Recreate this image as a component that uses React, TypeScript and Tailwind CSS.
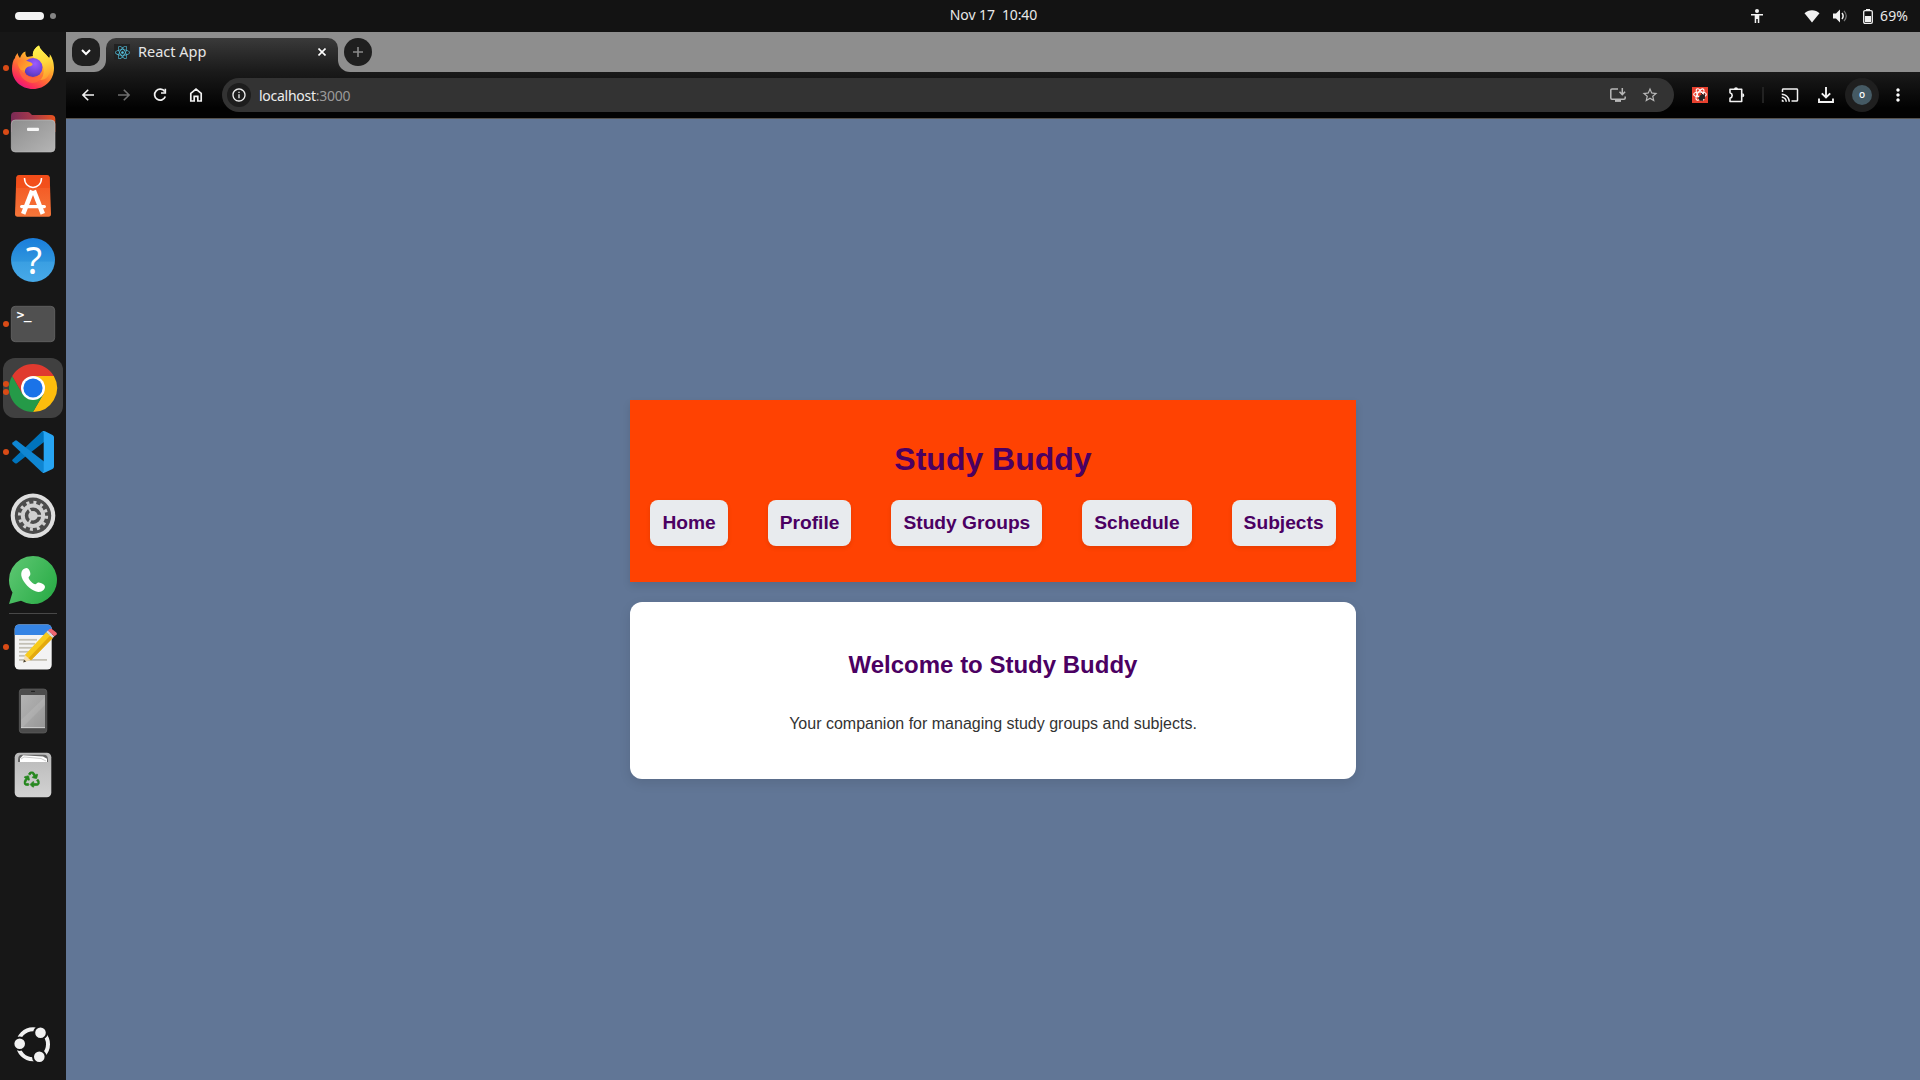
import React from "react";
import { FaReact, FaRecycle } from "react-icons/fa";
import {
  MdCast,
  MdInfoOutline,
  MdMoreVert,
  MdStarBorder,
} from "react-icons/md";

type DockItemProps = {
  dots?: number;
  active?: boolean;
  children: React.ReactNode;
};

function DockItem({ dots = 0, active = false, children }: DockItemProps) {
  return (
    <div
      className={
        active
          ? "relative size-[60px] shrink-0 rounded-xl bg-[#404040]"
          : "relative size-[60px] shrink-0"
      }
    >
      <svg viewBox="0 0 60 60" className="size-[60px]">
        {children}
      </svg>
      <div className="absolute top-0 left-0 flex h-full flex-col items-center justify-center gap-[2px]">
        {Array.from({ length: dots }).map((_, i) => (
          <span key={i} className="block size-[6px] rounded-full bg-[#d94b16]" />
        ))}
      </div>
    </div>
  );
}

function Firefox() {
  return (
    <>
      <defs>
        <linearGradient id="ffBody" x1="0.8" y1="0.1" x2="0.25" y2="1">
          <stop offset="0" stopColor="#fff14a" />
          <stop offset="0.3" stopColor="#ffb52c" />
          <stop offset="0.6" stopColor="#ff6a35" />
          <stop offset="0.85" stopColor="#fb2b5a" />
          <stop offset="1" stopColor="#e0158a" />
        </linearGradient>
        <radialGradient id="ffGlobe" cx="0.6" cy="0.3" r="0.8">
          <stop offset="0" stopColor="#9c5bff" />
          <stop offset="0.6" stopColor="#7043d8" />
          <stop offset="1" stopColor="#4b36a8" />
        </radialGradient>
        <linearGradient id="ffFlame" x1="0.4" y1="0" x2="0.6" y2="1">
          <stop offset="0" stopColor="#fff44f" />
          <stop offset="0.5" stopColor="#ffd93a" />
          <stop offset="1" stopColor="#ff9a2e" />
        </linearGradient>
        <linearGradient id="ffFox" x1="0" y1="0" x2="1" y2="0.6">
          <stop offset="0" stopColor="#ff7a2d" />
          <stop offset="1" stopColor="#ffb52c" />
        </linearGradient>
      </defs>
      <path
        d="M12 20 C12 18 14 16 14.5 15 C15 17 16 19 17 20 C18 17 20 14 22.5 13.5 C22 16 23 18 24 19 L30 18 C29 13 33 9 36 7.5 C37 12 42 15 46 20 C47 19 47 17 46.500 16 C50 20 51 26 51 30 C51 42 42 51 30 51 C18 51 9 42 9 31 C9 26 10 22 12 20 Z"
        fill="url(#ffBody)"
      />
      <path
        d="M30 18.500 C29 13 33 9 36 7.500 C37 12 42 15 46 20 C49 25 49 33 45 38 C43 41 40 42 37 42 C42 38 42 29 37 24 C35 21 31 21 30 18.500 Z"
        fill="url(#ffFlame)"
      />
      <circle cx="30" cy="29.500" r="9.500" fill="url(#ffGlobe)" />
      <path
        d="M14.500 23 C18 21.500 21 22.500 24 23 C27 24 29.700 25 29.700 26.500 C29 28 26 28.500 24.500 29 C22 30.500 22 33 21 35 C18 33 14 28 14.500 23 Z"
        fill="url(#ffFox)"
      />
      <path
        d="M20.700 32 C22 38 27 40 31 40 C36 40 39 37 40 34 C40 41 35 45 29 45 C22 44 17 39 16 32 Z"
        fill="#ff7139"
        opacity="0.65"
      />
    </>
  );
}

function Files() {
  return (
    <>
      <defs>
        <linearGradient id="fiBack" x1="0" y1="0" x2="1" y2="0">
          <stop offset="0" stopColor="#7a2a56" />
          <stop offset="0.5" stopColor="#a8394a" />
          <stop offset="1" stopColor="#e9541f" />
        </linearGradient>
        <linearGradient id="fiFront" x1="0" y1="0" x2="1" y2="1">
          <stop offset="0" stopColor="#8d8d8d" />
          <stop offset="1" stopColor="#b5b5b5" />
        </linearGradient>
      </defs>
      <path
        d="M8 14 Q8 10 12 10 H25 Q26.500 10 27.500 11.500 L29 13 H48 Q52.300 13 52.300 17 V30 H8 Z"
        fill="url(#fiBack)"
      />
      <rect x="8.300" y="18" width="43.700" height="32" rx="4" fill="url(#fiFront)" stroke="#c0c0c0" strokeWidth="0.600" />
      <rect x="24" y="25.700" width="12" height="3.300" rx="1" fill="#f7f7f7" />
    </>
  );
}

function AppCenter() {
  return (
    <>
      <defs>
        <linearGradient id="apBag" x1="0" y1="0" x2="0" y2="1">
          <stop offset="0" stopColor="#f4511e" />
          <stop offset="1" stopColor="#f5763a" />
        </linearGradient>
      </defs>
      <path d="M16 9 H44 Q46.500 9 46.700 11.500 L48 48 Q48 50.700 45.500 50.700 H14.500 Q12 50.700 12 48 L13.300 11.500 Q13.500 9 16 9 Z" fill="url(#apBag)" />
      <path d="M12.900 22 L13.300 11.500 Q13.500 9 16 9 H44 Q46.500 9 46.700 11.500 L47.100 22 Z" fill="#f04a15" opacity="0.600" />
      <path d="M21.500 12 C21.500 24.500 38.500 24.500 38.500 12" fill="none" stroke="#fff" strokeWidth="1.500" />
      <g stroke="#fff" fill="none" strokeLinecap="butt">
        <path d="M29.200 24.700 L20.200 47.800" strokeWidth="4.600" />
        <path d="M30.800 24.700 L39.800 47.800" strokeWidth="4.600" />
        <path d="M18.700 40.600 H41.300" strokeWidth="3.400" strokeLinecap="round" />
      </g>
    </>
  );
}

function Help() {
  return (
    <>
      <defs>
        <linearGradient id="heBg" x1="0" y1="0" x2="0" y2="1">
          <stop offset="0" stopColor="#1a7ddb" />
          <stop offset="0.530" stopColor="#2e95dd" />
          <stop offset="0.540" stopColor="#3a9fe2" />
          <stop offset="1" stopColor="#47a9e8" />
        </linearGradient>
      </defs>
      <circle cx="30" cy="30" r="22" fill="url(#heBg)" />
      <text x="30.800" y="43.800" textAnchor="middle" fontSize="37.500" fill="#fff" fontFamily="Noto Sans, sans-serif">
        ?
      </text>
    </>
  );
}

function Terminal() {
  return (
    <>
      <rect x="8.300" y="12.300" width="43.400" height="35.400" rx="4" fill="#505050" stroke="#676767" strokeWidth="0.800" />
      <text x="13.500" y="25.200" fontSize="13" fontWeight="700" fill="#fff" fontFamily="DejaVu Sans Mono, monospace" letterSpacing="-0.500">
        &gt;_
      </text>
    </>
  );
}

function Chrome() {
  return (
    <>
      <path d="M30 18 H50.800 A24 24 0 0 1 30 54 L40.400 36 Z" fill="#fdbd0d" />
      <path d="M30 54 A24 24 0 0 1 9.220 18 L19.600 36 L40.400 36 Z" fill="#259a48" />
      <path d="M9.220 18 A24 24 0 0 1 50.780 18 H30 L19.600 36 Z" fill="#e03a2f" />
      <circle cx="30" cy="30" r="12" fill="#fff" />
      <circle cx="30" cy="30" r="9.600" fill="#1a73e8" />
    </>
  );
}

function Code() {
  return (
    <>
      <path d="M9.600 37.500 Q8.600 38.300 9.600 39.300 L12 41.200 Q13 42 14 41.200 L41 20 V9 L38.700 9.800 Z" fill="#0074bd" />
      <path d="M9.600 22.500 Q8.600 21.500 9.600 20.600 L12 18.700 Q13 18 14 18.700 L41 39.500 V51 L38.700 50 Z" fill="#0f86d2" />
      <path d="M38.600 50.300 Q40.200 51.500 42 50.600 L49.500 47 Q51 46.200 51 44.600 V15.200 Q51 13.700 49.500 13 L42 9.200 Q40.200 8.400 38.600 9.700 Q40.700 8.600 40.700 11.500 V48.500 Q40.700 51.200 38.600 50.300 Z" fill="#27a5f3" />
    </>
  );
}

function Settings() {
  return (
    <>
      <circle cx="30" cy="29.800" r="22.300" fill="#dedede" />
      <circle cx="30" cy="29.800" r="18.200" fill="#4b4b4b" />
      <circle cx="30" cy="29.800" r="13.500" fill="none" stroke="#d0d0d0" strokeWidth="3.200" strokeDasharray="3 4.070" />
      <circle cx="30" cy="29.800" r="10.200" fill="none" stroke="#d0d0d0" strokeWidth="4" />
      <circle cx="30" cy="29.800" r="4.700" fill="#d0d0d0" />
      <g stroke="#d0d0d0" strokeWidth="2">
        <path d="M30 29.800 H41" />
        <path d="M30 29.800 L24.500 20.300" />
        <path d="M30 29.800 L24.500 39.300" />
      </g>
    </>
  );
}

function WhatsApp() {
  return (
    <>
      <defs>
        <linearGradient id="waBg" x1="0" y1="0" x2="1" y2="0.600">
          <stop offset="0" stopColor="#5fc874" />
          <stop offset="1" stopColor="#2eae4a" />
        </linearGradient>
      </defs>
      <path d="M30 6 A24 24 0 1 1 18 50.800 L6 54 L9.500 42.500 A24 24 0 0 1 30 6 Z" fill="url(#waBg)" />
      <path
        transform="translate(18 18)"
        d="M2 1.500 C4 0 6 -0.500 7.500 1 C9 3 9.800 5.500 9.200 7 C8.800 8.200 7.500 8.700 7.600 9.800 C8 12 12 16 14.200 16.300 C15.300 16.400 15.800 14.800 17 14.500 C18.800 14.200 21.500 15.500 23.200 17 C24.600 18.500 24 20.500 22.500 22 C20.500 24 17.500 24.500 14.500 23.300 C8.500 20.800 3 15.500 0.800 9.500 C-0.300 6.500 0.200 3.300 2 1.500 Z"
        fill="#fff"
      />
    </>
  );
}

function Editor() {
  return (
    <>
      <rect x="11.700" y="7.500" width="37" height="45" rx="4.500" fill="#f3f3f3" />
      <path d="M11.700 18 V12 Q11.700 7.500 16.200 7.500 H44.200 Q48.700 7.500 48.700 12 V18 Z" fill="#3584e4" />
      <g stroke="#c3c0b5" strokeWidth="1.800">
        <path d="M16 22.800 H34" />
        <path d="M16 26.800 H32" />
        <path d="M16 30.800 H29" />
        <path d="M16 34.800 H26" />
        <path d="M16 38.800 H23" />
        <path d="M16 42.900 H44" />
      </g>
      <path d="M20.300 45.500 L22 37.500 L28 43 Z" fill="#f5deae" />
      <path d="M20.300 45.500 L20.900 42.600 L23.200 44.600 Z" fill="#4a4438" />
      <path d="M21.800 38 L43.300 15 L49.800 21 L28 43.300 Z" fill="#f7cb1c" />
      <path d="M25.500 41.200 L47.200 18.600 L49.800 21 L28 43.300 Z" fill="#e3a90e" />
      <path d="M43.300 15 L44.900 13.400 L51.300 19.300 L49.800 21 Z" fill="#d9d9d9" />
      <path d="M44.900 13.400 L46.300 12.300 Q47.800 11.300 49.500 12.600 L53.300 15.500 Q54.500 16.700 53.500 17.800 L51.300 19.300 Z" fill="#ee6570" />
    </>
  );
}

function Mobile() {
  return (
    <>
      <defs>
        <linearGradient id="moBg" x1="0" y1="0" x2="1" y2="1">
          <stop offset="0" stopColor="#b3b3b3" />
          <stop offset="0.500" stopColor="#a6a6a6" />
          <stop offset="1" stopColor="#969696" />
        </linearGradient>
      </defs>
      <rect x="16.300" y="8" width="27.500" height="44" rx="3" fill="#4c4c4c" stroke="#606060" strokeWidth="0.700" />
      <rect x="28" y="9.800" width="4" height="1.200" rx="0.600" fill="#222" />
      <rect x="18" y="14" width="24" height="33" fill="url(#moBg)" />
      <path d="M18 39 L42 16 V24 L19 47 H18 Z" fill="#fff" opacity="0.100" />
      <path d="M18 46.700 H42" stroke="#ddd" strokeWidth="0.800" />
    </>
  );
}

function Trash() {
  return (
    <>
      <defs>
        <linearGradient id="trBg" x1="0" y1="0" x2="0" y2="1">
          <stop offset="0" stopColor="#b9b9b9" />
          <stop offset="1" stopColor="#d2d2d2" />
        </linearGradient>
      </defs>
      <rect x="11.700" y="7.700" width="36.600" height="44.600" rx="4.500" fill="url(#trBg)" />
      <path d="M15 15 Q15 9.700 19 9.700 H41 Q45 9.700 45 15 V17 H15 Z" fill="#666" />
      <path d="M17 17 V13.500 L20 10.300 L40 11.500 L44 13.800 V17 Z" fill="#fff" />
      <path d="M18 14 L21 12 L38 13.500 L43 16" fill="none" stroke="#b5b5b5" strokeWidth="0.700" />
      <FaRecycle x={20.7} y={26.5} width={19} height={19} color="#26881f" stroke="#26881f" strokeWidth={22} />
    </>
  );
}

function UbuntuMark() {
  return (
    <svg viewBox="0 0 60 60" className="size-[60px]">
      <circle cx="30" cy="30.300" r="15" fill="none" stroke="#f2f2f2" strokeWidth="4" />
      <g fill="#f2f2f2" stroke="#171717" strokeWidth="2">
        <circle cx="16.700" cy="29.700" r="6.300" />
        <circle cx="37.500" cy="18.700" r="6.300" />
        <circle cx="36.300" cy="42.700" r="6.300" />
      </g>
    </svg>
  );
}

function Dock() {
  return (
    <aside className="flex w-[66px] shrink-0 flex-col items-center bg-[#171717] pt-[6px] pb-[6px]">
      <div className="flex flex-col gap-1">
        <DockItem dots={1}><Firefox /></DockItem>
        <DockItem dots={1}><Files /></DockItem>
        <DockItem><AppCenter /></DockItem>
        <DockItem><Help /></DockItem>
        <DockItem dots={1}><Terminal /></DockItem>
        <DockItem dots={2} active><Chrome /></DockItem>
        <DockItem dots={1}><Code /></DockItem>
        <DockItem><Settings /></DockItem>
        <DockItem><WhatsApp /></DockItem>
      </div>
      <div className="my-[3px] h-px w-12 shrink-0 bg-[#484848]" />
      <div className="flex flex-col gap-1">
        <DockItem dots={1}><Editor /></DockItem>
        <DockItem><Mobile /></DockItem>
        <DockItem><Trash /></DockItem>
      </div>
      <div className="mt-auto">
        <UbuntuMark />
      </div>
    </aside>
  );
}

function TopBar() {
  return (
    <header className="grid h-8 shrink-0 grid-cols-[1fr_auto_1fr] items-center bg-[#131313] pr-3 pl-[15px] font-['Noto_Sans',sans-serif] text-[14px] text-[#e8e8e8]">
      <div className="flex items-center gap-[6px]">
        <span className="block h-2 w-[29px] rounded-full bg-[#f4f4f4]" />
        <span className="block size-[6px] rounded-full bg-[#858585]" />
      </div>
      <div className="pb-[3px] pl-[64px] tracking-[-0.1px] whitespace-pre">Nov 17&nbsp; 10:40</div>
      <div className="flex items-center justify-end">
        <svg viewBox="0 0 12 14" className="mr-[41px] h-[14px] w-3" fill="#f2f2f2">
          <circle cx="6" cy="2" r="2" />
          <path d="M0 5 H12 V6.500 H8.300 V14 H6.800 V10 H5.200 V14 H3.700 V6.500 H0 Z" />
        </svg>
        <svg viewBox="0 0 16 14" className="mr-[13px] h-[14px] w-4" fill="#f2f2f2">
          <path d="M8 13.500 L0.500 4.300 C4.500 0.300 11.500 0.300 15.500 4.300 Z" />
        </svg>
        <svg viewBox="0 0 15 14" className="mr-[15px] h-[14px] w-[15px]" fill="#f2f2f2">
          <path d="M0 4.500 H3 L7 0.500 V13.500 L3 9.500 H0 Z" />
          <path d="M9 4 Q11.300 7 9 10" fill="none" stroke="#f2f2f2" strokeWidth="1.500" />
          <path d="M11 1.800 Q15.500 7 11 12.200" fill="none" stroke="#777" strokeWidth="1.200" />
        </svg>
        <svg viewBox="0 0 10 15" className="mr-[7px] h-[15px] w-[10px]">
          <rect x="3" y="0" width="4" height="2" fill="#f2f2f2" />
          <rect x="0.700" y="1.700" width="8.600" height="12.600" rx="1.300" fill="none" stroke="#f2f2f2" strokeWidth="1.300" />
          <rect x="2" y="7" width="6" height="6" fill="#f2f2f2" />
        </svg>
        <span className="pb-[2px] tracking-[0.1px]">69%</span>
      </div>
    </header>
  );
}

function TabStrip() {
  return (
    <div className="flex h-10">
      <div className="w-10 rounded-br-[12px] bg-[#8e8e8e] pt-[6px] pl-[6px]">
        <div className="flex size-7 items-center justify-center rounded-[10px] bg-[#1f1f1f]">
          <svg viewBox="0 0 10 10" className="size-[10px]" fill="none" stroke="#fff" strokeWidth="2">
            <path d="M1 3 L5 7 L9 3" />
          </svg>
        </div>
      </div>
      <div className="w-[232px] bg-[linear-gradient(#8e8e8e_20px,transparent_20px)] pt-[6px]">
        <div className="flex h-[34px] items-center rounded-t-[10px] bg-linear-to-b from-[#3a3a3a] to-[#1a1a1a] pr-3 pb-[6px] pl-2">
          <div className="flex size-4 items-center justify-center bg-[#222]">
            <FaReact className="size-[15px] text-[#53c1de]" />
          </div>
          <span className="ml-2 font-['Noto_Sans',sans-serif] text-[14.5px] text-[#e6e6e6]">React App</span>
          <svg viewBox="0 0 8 8" className="ml-auto size-2" stroke="#fff" strokeWidth="1.600">
            <path d="M0.500 0.500 L7.500 7.500 M7.500 0.500 L0.500 7.500" />
          </svg>
        </div>
      </div>
      <div className="flex-1 rounded-bl-[12px] bg-[#8e8e8e] pt-[6px] pl-[6px]">
        <div className="flex size-7 items-center justify-center rounded-full bg-[#1f1f1f]">
          <svg viewBox="0 0 10 10" className="size-[10px]" stroke="#8a8a8a" strokeWidth="1.600">
            <path d="M5 0 V10 M0 5 H10" />
          </svg>
        </div>
      </div>
    </div>
  );
}

function Toolbar() {
  return (
    <div className="flex h-[46px] items-center px-1">
      <div className="flex">
        {[
          { c: "#f2f2f2", d: "M14 8 H3 M8.200 2.700 L2.900 8 L8.200 13.300" },
          { c: "#6f6f6f", d: "M2 8 H13 M7.800 2.700 L13.100 8 L7.800 13.300" },
        ].map((a) => (
          <div key={a.c} className="flex h-9 w-9 items-center justify-center">
            <svg viewBox="0 0 16 16" className="size-4" fill="none" stroke={a.c} strokeWidth="1.600">
              <path d={a.d} />
            </svg>
          </div>
        ))}
        <div className="flex h-9 w-9 items-center justify-center">
          <svg viewBox="0 0 16 16" className="size-4" fill="none" stroke="#f2f2f2" strokeWidth="1.700">
            <path d="M12.700 4.600 A5.500 5.500 0 1 0 13.300 9.500" />
            <path d="M13.300 1.800 V6 H9" />
          </svg>
        </div>
        <div className="flex h-9 w-9 items-center justify-center">
          <svg viewBox="0 0 16 16" className="size-4" fill="none" stroke="#f2f2f2" strokeWidth="1.700">
            <path d="M2.800 6.300 L8 2.200 L13.200 6.300 V14 H9.800 V9.300 H6.200 V14 H2.800 Z" />
          </svg>
        </div>
      </div>
      <div className="ml-2 flex h-[34px] w-[1452px] items-center rounded-full bg-[#333] pr-[15px] pl-[5px]">
        <div className="flex size-6 items-center justify-center rounded-full bg-[#1d1d1d]">
          <MdInfoOutline className="size-4 text-[#eee]" />
        </div>
        <span className="ml-2 font-['Noto_Sans',sans-serif] text-[14px] tracking-[-0.27px] text-[#ededed]">
          localhost<span className="text-[#9a9a9a]">:3000</span>
        </span>
        <svg viewBox="0 0 16 14" className="ml-auto h-[14px] w-4" fill="none" stroke="#b8b8b8" strokeWidth="1.500">
          <path d="M8 0.900 H2 Q0.800 0.900 0.800 2 V10 Q0.800 11.200 2 11.200 H14 Q15.200 11.200 15.200 10 V8.500" />
          <path d="M12.300 0 V6 M9.500 3.800 L12.300 6.600 L15.100 3.800" />
          <path d="M5 12.900 H11" strokeWidth="2" />
        </svg>
        <MdStarBorder className="ml-[15px] size-[18px] text-[#b8b8b8]" />
      </div>
      <div className="ml-[18px] flex size-4 items-center justify-center bg-[#e8412f]">
        <svg viewBox="0 0 16 16" className="size-4">
          <g fill="none" stroke="#fff" strokeWidth="1.100">
            <ellipse cx="8" cy="7.500" rx="6.300" ry="2.500" />
            <ellipse cx="8" cy="7.500" rx="6.300" ry="2.500" transform="rotate(60 8 7.500)" />
            <ellipse cx="8" cy="7.500" rx="6.300" ry="2.500" transform="rotate(120 8 7.500)" />
          </g>
          <ellipse cx="9.700" cy="10.500" rx="2.500" ry="3.400" fill="#222" transform="rotate(30 9.700 10.500)" />
          <path d="M6 10.500 L11 14 M12.500 6.500 L12.500 12 M9 6 L11 8" stroke="#222" strokeWidth="0.900" />
        </svg>
      </div>
      <svg viewBox="0 0 16 16" className="ml-[21px] size-4" fill="none" stroke="#f2f2f2" strokeWidth="1.600">
        <path d="M1 2.300 H12.700 V14.500 H1 V11.200 Q3.200 10.500 3.200 8.500 Q3.200 6.500 1 5.800 Z" strokeLinejoin="round" />
        <path d="M5 2.300 A2 2 0 0 1 9 2.300 Z M13.300 6.300 A2 2 0 0 1 13.300 10.300 Z" fill="#f2f2f2" stroke="none" />
      </svg>
      <div className="ml-[17px] h-4 w-[2px] bg-[#222]" />
      <MdCast className="ml-[17px] size-[18px] text-[#f2f2f2]" />
      <svg viewBox="0 0 16 16" className="ml-[19px] size-4" fill="none" stroke="#f2f2f2" strokeWidth="1.900">
        <path d="M8 0 V10 M3.800 6.300 L8 10.500 L12.200 6.300 M1 11.500 V15 H15 V11.500" />
      </svg>
      <div className="ml-[11px] flex size-[34px] items-center justify-center rounded-full bg-[#1f1f1f]">
        <div className="flex size-5 items-center justify-center rounded-full bg-[#455a64] font-['Noto_Sans',sans-serif] text-[10px] font-medium text-white">
          <span className="pb-[2px]">o</span>
        </div>
      </div>
      <MdMoreVert className="ml-[9px] size-5 text-white" />
    </div>
  );
}

const links = ["Home", "Profile", "Study Groups", "Schedule", "Subjects"];

function Page() {
  return (
    <main className="flex flex-1 flex-col items-center bg-[#617696] pt-[281px] font-['Liberation_Sans',Arial,sans-serif]">
      <section className="flex h-[182px] w-[726px] flex-col items-center bg-[#ff4202] px-5 pt-[41px] shadow-[0_4px_8px_rgba(0,0,0,0.1)]">
        <h1 className="text-[32px] leading-[37px] font-bold text-[#4b0062]">Study Buddy</h1>
        <nav className="mt-[22px] flex gap-10">
          {links.map((label) => (
            <a
              key={label}
              className="rounded-lg bg-[#e8ebee] p-3 text-[19.2px] leading-[22px] font-bold whitespace-nowrap text-[#4b0062] shadow-[0_2px_4px_rgba(0,0,0,0.1)]"
            >
              {label}
            </a>
          ))}
        </nav>
      </section>
      <section className="mt-5 flex h-[177px] w-[726px] flex-col items-center rounded-xl bg-white pt-[49px] shadow-[0_4px_12px_rgba(0,0,0,0.1)]">
        <h2 className="text-[24px] leading-[27px] font-bold text-[#4b0062]">Welcome to Study Buddy</h2>
        <p className="mt-[37px] text-[16px] leading-[18px] text-[#333]">
          Your companion for managing study groups and subjects.
        </p>
      </section>
    </main>
  );
}

export default function App() {
  return (
    <div className="flex h-[1080px] w-[1920px] flex-col overflow-hidden">
      <TopBar />
      <div className="flex min-h-0 flex-1">
        <Dock />
        <div className="flex flex-1 flex-col">
          <div className="bg-[linear-gradient(#3f3f3f_6px,#1a1a1a_40px,#020202_76px)]">
            <TabStrip />
            <Toolbar />
          </div>
          <div className="h-px bg-[#56534f]" />
          <Page />
        </div>
      </div>
    </div>
  );
}
